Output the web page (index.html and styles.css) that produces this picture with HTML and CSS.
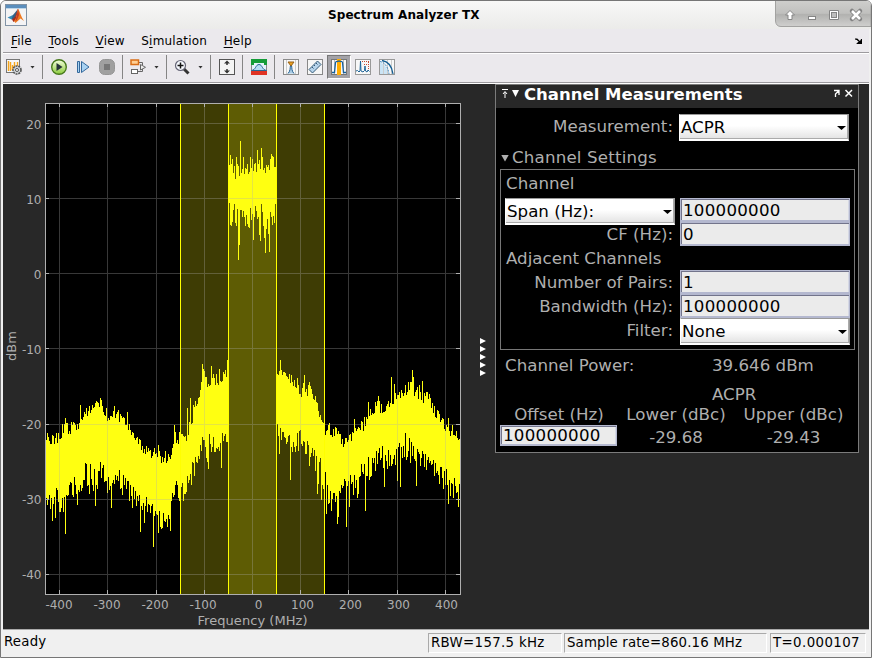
FILE: index.html
```html
<!DOCTYPE html>
<html lang="en">
<head>
<meta charset="utf-8">
<title>Spectrum Analyzer TX</title>
<link rel="stylesheet" href="styles.css">
</head>
<body>
<div class="window">
  <header class="titlebar">
    <svg class="logo" width="22" height="22" viewBox="0 0 22 22">
      <rect x=".5" y=".5" width="21" height="21" fill="#f4f4f4" stroke="#8193a5"/>
      <rect x="1" y="1" width="20" height="3" fill="#5b8fbd"/><rect x="1" y="4" width="20" height="1" fill="#bed6e8"/>
      <path d="M2.500 13.500L8 11L10 13L6.500 15.500Z" fill="#358bb8"/><path d="M8 11L13 5L10 15L6.500 15.500Z" fill="#345f82"/>
      <path d="M13 4.500L11 16L8.500 18L7 15.500L10 13Z" fill="#a62b1c"/><path d="M13 4.500C15 8 16 13 19 17L15.500 14.500L10.500 19L9 17C12 14 12 9 13 4.500Z" fill="#ed7a22"/><path d="M13 4.500L14 11L12 16L10.500 17Z" fill="#c63d20"/>
    </svg>
    <h1>Spectrum Analyzer TX</h1>
    <svg class="controls" width="96" height="27" viewBox="0 0 96 27">
      <defs><linearGradient id="cg" x1="0" y1="0" x2="0" y2="1"><stop offset="0" stop-color="#cfcfcd"/><stop offset=".5" stop-color="#c0c0be"/><stop offset=".55" stop-color="#b2b2b0"/><stop offset="1" stop-color="#d0d0ce"/></linearGradient></defs>
      <path d="M.500 0V21Q1 26.500 6 26.500H96V0Z" fill="url(#cg)" stroke="#a2a2a0"/>
      <path d="M15 10.500L19.500 15H17V19.500H13V15H10.500Z" fill="#fff" stroke="#858585"/>
      <rect x="33.500" y="16.500" width="7" height="3" fill="#fff" stroke="#858585"/>
      <path d="M54.500 10.500H63.500V19.500H54.500Z" fill="#fff" stroke="#858585"/><rect x="56.500" y="12.500" width="5" height="5" fill="#bebebe" stroke="#858585"/>
      <path d="M77 11L85 19M85 11L77 19" stroke="#858585" stroke-width="4.500" stroke-linecap="round"/><path d="M77 11L85 19M85 11L77 19" stroke="#fff" stroke-width="2.600"/>
    </svg>
  </header>
  <nav class="menubar">
    <span><u>F</u>ile</span><span><u>T</u>ools</span><span><u>V</u>iew</span><span>S<u>i</u>mulation</span><span><u>H</u>elp</span>
    <svg class="dock" width="7" height="6" viewBox="0 0 7 6"><path d="M0 1H2L5 4M6.500 1V5.500H2.500L4.500 3.500" fill="#000" stroke="#000" stroke-width="1.200"/></svg>
  </nav>
  <div class="toolbar">
    <svg width="16" height="16" viewBox="0 0 16 16"><rect x=".5" y=".5" width="13" height="13" fill="#f7f7f7" stroke="#777"/><path d="M2.500 2V12M4.500 3V12M6.500 6V11M8.500 3V8M11.500 3V7" stroke="#f4a51c" stroke-width="1.400"/><circle cx="11" cy="11" r="4" fill="#d0d4d8" stroke="#555" stroke-width="1.600" stroke-dasharray="2 .8"/><circle cx="11" cy="11" r="1.500" fill="#fff" stroke="#555"/></svg>
    <i class="caret"></i><i class="sep"></i>
    <svg width="16" height="16" viewBox="0 0 16 16"><defs><linearGradient id="pg" x2="0" y2="1"><stop stop-color="#f6ffe0"/><stop offset="1" stop-color="#8bcb3b"/></linearGradient></defs><circle cx="8" cy="8" r="7.300" fill="url(#pg)" stroke="#47791c" stroke-width="1.400"/><path d="M5.500 4L11.500 8L5.500 12Z" fill="#263238"/></svg>
    <svg width="16" height="16" viewBox="0 0 16 16"><path d="M2.500 2.500H4.500V13.500H2.500ZM6.500 2.500L14 8L6.500 13.500Z" fill="#a9d2f2" stroke="#33689c"/></svg>
    <svg width="16" height="16" viewBox="0 0 16 16"><rect x=".5" y=".5" width="15" height="15" rx="5" fill="#a0a0a0" stroke="#969696"/><rect x="5" y="5" width="6" height="6" fill="#777"/></svg>
    <i class="sep"></i>
    <svg class="pull" width="16" height="16" viewBox="0 0 16 16"><path d="M8 3.500H12.500V6M8 12.500H12.500V10" fill="none" stroke="#666"/><rect x="1" y="1" width="7.500" height="4.500" fill="#ffcf94" stroke="#d96d16" stroke-width="1.500"/><rect x="1.500" y="10.500" width="6" height="4" fill="#fff" stroke="#666"/><path d="M10.500 5.500V11L15.500 8.300Z" fill="#eee" stroke="#666"/></svg>
    <i class="caret"></i><i class="sep"></i>
    <svg class="pull" width="16" height="16" viewBox="0 0 16 16"><path d="M10 10L14.500 14.500" stroke="#333" stroke-width="3"/><circle cx="6.500" cy="6.500" r="5" fill="#f7faff" stroke="#667" stroke-width="1.200"/><path d="M3.500 6.500H9.500M6.500 3.500V9.500" stroke="#111" stroke-width="1.500"/></svg>
    <i class="caret"></i><i class="sep"></i>
    <svg width="16" height="16" viewBox="0 0 16 16"><rect x=".5" y=".5" width="15" height="15" fill="#f4f4f4" stroke="#555"/><path d="M5 4.500L8 1.500L11 4.500ZM5 11.500L8 14.500L11 11.500Z" fill="#333"/><path d="M8 4V6M8 10V12" stroke="#333" stroke-width="1.500"/></svg>
    <i class="sep"></i>
    <svg width="16" height="16" viewBox="0 0 16 16"><rect x=".5" y=".5" width="15" height="15" fill="#e4f2fb" stroke="#888"/><path d="M0 0H16V6H13V4H3V6H0Z" fill="#159c38"/><rect y="12" width="16" height="4" fill="#df3324"/><path d="M.5 11.500C5 11 4.500 5.500 8 5.500S11 11 15.500 11.500Z" fill="#b6dcf4" stroke="#286793"/></svg>
    <i class="sep"></i>
    <svg width="16" height="16" viewBox="0 0 16 16"><rect x=".5" y=".5" width="15" height="15" fill="#f8f8f8" stroke="#8b8b8b"/><path d="M3.500 1V15M12.500 1V15" stroke="#ccc"/><path d="M5 14.500C7.500 12 7 9 7.500 6H8.500C9 9 8.500 12 11 14.500" fill="#a9cbe4" stroke="#235f8f"/><path d="M5 3H11L8 7Z" fill="#eda01d" stroke="#956118"/></svg>
    <svg width="16" height="16" viewBox="0 0 16 16"><rect x=".5" y=".5" width="15" height="15" fill="#f6f6f6" stroke="#888"/><path d="M2 10.500L10.500 2L14 5.500L5.500 14Z" fill="#b7d4ec" stroke="#345a78"/><path d="M5 8L6.500 9.500M7 6L8 7M9 4L10.500 5.500" stroke="#345a78"/></svg>
    <span class="pressed"><svg width="16" height="16" viewBox="0 0 16 16"><rect x=".5" y=".5" width="15" height="15" fill="#f8f8f8" stroke="#777"/><path d="M3.500 1V15M12.500 1V15" stroke="#bbb"/><rect x="6" y="0" width="4" height="16" fill="#ffac00"/><path d="M1 13.500H3.500L4.500 3.500Q5 2 6.500 2.500L8 2L9.500 2.500Q11 2 11.500 3.500L12.500 13.500H15" fill="none" stroke="#17609b" stroke-width="1.300"/></svg></span>
    <svg width="16" height="16" viewBox="0 0 16 16"><rect x=".5" y=".5" width="15" height="15" fill="#f8f8f8" stroke="#999"/><path d="M1 12L2.500 11.500L4 13L5 12L5.500 2L6 12L8 13L9.500 11.500L10 7L10.500 12L12 13L13 11L14.500 12.500" fill="none" stroke="#1d6398"/><path d="M7 2.500H14M13.500 3V10M9 5.500H13" stroke="#c54b32" stroke-dasharray="1 1"/></svg>
    <svg width="16" height="16" viewBox="0 0 16 16"><rect x=".5" y=".5" width="15" height="15" fill="#f8f8f8" stroke="#999"/><path d="M1 3.500C6 5 8 9 9 15H1Z" fill="#cae4f6"/><path d="M4.500 1V15M8.500 1V15M12.500 1V15" stroke="#ccc"/><path d="M1 2.500C6 3.500 9 8 10 15" fill="none" stroke="#458bc0" stroke-dasharray="2 1"/><path d="M3 1.500C10 2.500 13 8 14 15" fill="none" stroke="#165f94" stroke-width="1.300"/></svg>
  </div>
  <main class="workspace">
    <svg class="plot" width="468" height="545" viewBox="3 84 468 545">
      <rect x="45" y="103" width="415" height="491" fill="#000"/>
      <rect x="180" y="104" width="144" height="490" fill="#3e3c04"/>
      <rect x="228" y="104" width="48" height="490" fill="#5e5c04"/>
      <path id="trace" class="trace"/>
      <path id="grid" class="grid"/>
      <path class="edge" d="M180.500 104V594M228.500 104V594M276.500 104V594M324.500 104V594"/>
      <rect class="frame" x="45.500" y="103.500" width="415" height="491"/>
      <path id="ticks" class="frame"/>
      <g class="ylab"><text x="41.500" y="129">20</text><text x="41.500" y="204">10</text><text x="41.500" y="279">0</text><text x="41.500" y="354">-10</text><text x="41.500" y="429">-20</text><text x="41.500" y="504">-30</text><text x="41.500" y="579">-40</text></g>
      <g class="xlab"><text x="59" y="609">-400</text><text x="107" y="609">-300</text><text x="155" y="609">-200</text><text x="203" y="609">-100</text><text x="258.500" y="609">0</text><text x="302.500" y="609">100</text><text x="350.500" y="609">200</text><text x="398.500" y="609">300</text><text x="446.500" y="609">400</text><text class="axis" x="252.500" y="625" textLength="110">Frequency (MHz)</text><text class="axis" transform="translate(16 346) rotate(-90)">dBm</text></g>
    </svg>
    <div class="splitter"><i></i><i></i><i></i><i></i><i></i></div>
    <section class="panel">
      <div class="panel-head">
        <svg width="20" height="10" viewBox="0 0 20 10"><path d="M1 .5H7M4 9V3M2 5L4 2.500L6 5" stroke="#fff" fill="none"/><path d="M11 1H18L14.500 8Z" fill="#fff"/></svg>
        <h2>Channel Measurements</h2>
        <svg class="panel-tools" width="20" height="9" viewBox="0 0 20 9"><path d="M1 1.500H6V6M5.500 2L2.500 5V8" fill="none" stroke="#fff" stroke-width="1.300"/><path d="M12.500 1L19 7.500M19 1L12.500 7.500" stroke="#fff" stroke-width="1.500"/></svg>
      </div>
      <div class="measure"><label>Measurement:</label><div class="combo">ACPR</div></div>
      <div class="section-title"><i></i>Channel Settings</div>
      <div class="settings">
        <div class="group">Channel</div>
        <div class="row"><div class="combo">Span (Hz):</div><div class="field">100000000</div></div>
        <div class="row"><label>CF (Hz):</label><div class="field">0</div></div>
        <div class="row"><div class="group adjacent">Adjacent Channels</div></div>
        <div class="row"><label>Number of Pairs:</label><div class="field">1</div></div>
        <div class="row"><label>Bandwidth (Hz):</label><div class="field">100000000</div></div>
        <div class="row"><label>Filter:</label><div class="combo">None</div></div>
      </div>
      <div class="power"><span>Channel Power:</span><span>39.646 dBm</span></div>
      <div class="acpr-title">ACPR</div>
      <div class="results">
        <span>Offset (Hz)</span><span>Lower (dBc)</span><span>Upper (dBc)</span>
        <div class="field offset">100000000</div><span class="val">-29.68</span><span class="val">-29.43</span>
      </div>
    </section>
  </main>
  <footer class="status"><span class="ready">Ready</span><span class="cell rbw">RBW=157.5 kHz</span><span class="cell rate">Sample rate=860.16 MHz</span><span class="cell time">T=0.000107</span></footer>
</div>
<script src="plot.js"></script>
</body>
</html>
```
FILE: styles.css
```css
* { box-sizing: border-box; }
body { margin: 0; background: #fff; font: 12px "DejaVu Sans", sans-serif; color: #000; }
.window { width: 872px; height: 658px; border: 1px solid #767676; border-radius: 6px 6px 0 0; padding: 0 2px; background: #f0f0f0; overflow: hidden; display: flex; flex-direction: column; }
.titlebar { height: 28px; margin: 0 -2px; padding: 3px 0 0 4px; display: flex; background: linear-gradient(#f8f8f7, #ebebe9); flex: none; }
.titlebar h1 { flex: 1; margin: 3px 0 0; padding-left: 301px; font-size: 12px; line-height: 16px; letter-spacing: .08px; font-weight: bold; white-space: nowrap; }
.logo { flex: none; }
.controls { margin-top: -4px; flex: none; }
.menubar { height: 24px; background: #ebe9ed; border-bottom: 1px solid #9c9a9e; display: flex; align-items: center; gap: 16.6px; padding: 0 7px 0 8px; letter-spacing: .18px; flex: none; }
.menubar u { text-underline-offset: 2px; }
.dock { margin-left: auto; }
.toolbar { height: 30px; background: #ebe9ed; border-top: 1px solid #fff; border-bottom: 1px solid #9c9a9e; display: flex; align-items: center; gap: 8px; padding: 0 3px 2px; flex: none; }
.toolbar svg { flex: none; display: block; }
.caret { width: 5px; height: 3px; background: #333; clip-path: polygon(0 0, 100% 0, 50% 100%); }
.sep { width: 1px; height: 24px; background: #858585; margin-left: -1px; }
.toolbar .pull { margin-left: -1px; }
.pressed { width: 24px; height: 24px; margin: 0 -4px; padding: 3px; background: #a3a2a7; border: 1px solid #777; border-right-color: #fff; border-bottom-color: #fff; }
.workspace { height: 546px; border-top: 1px solid #fff; background: #282828; display: flex; flex: none; }
.plot { flex: none; display: block; shape-rendering: crispEdges; }
.trace { stroke: #ffff11; fill: none; }
.edge { stroke: #ffff00; }
.grid { stroke: #afafaf; stroke-opacity: .32; }
.frame { stroke: #afafaf; fill: none; }
.plot text { fill: #afafaf; font-size: 12px; }
.ylab { text-anchor: end; }
.xlab { text-anchor: middle; }
.plot .axis { font-size: 13px; }
.splitter { width: 24px; padding: 254px 0 0 9px; display: flex; flex-direction: column; gap: 2px; flex: none; }
.splitter i { border: 3px solid transparent; border-left: 6px solid #fff; border-right: 0; width: 6px; height: 6px; flex: none; }
.panel { width: 364px; height: 369px; border: 1px solid #7b7b7b; background: #000; color: #afafaf; font-size: 16.67px; line-height: 20px; white-space: nowrap; }
.panel-head { height: 23px; background: #282828; padding: 4px 5px 0 5px; display: flex; }
.panel h2 { margin: -5px 0 0 3px; color: #fff; font-size: 16.5px; line-height: 22px; }
.panel-tools { margin-left: auto; }
.measure { display: flex; gap: 6px; padding: 6px 0 0 13px; height: 39px; }
.measure label { width: 164px; text-align: right; padding-top: 3px; }
.combo { width: 170px; height: 27px; flex: none; background: linear-gradient(#fff 45%, #e2e2e2); border: 1px solid #999; border-left-color: #fff; border-bottom: 2px solid #fff; box-shadow: inset -1px -1px #aaa; color: #000; padding: 3px 1px; position: relative; }
.combo::after { content: ""; position: absolute; right: 2px; top: 11px; width: 9px; height: 4px; background: #000; clip-path: polygon(0 0, 100% 0, 50% 100%); }
.section-title { height: 22px; display: flex; align-items: center; gap: 3px; padding-left: 5px; letter-spacing: .18px; }
.section-title i { width: 8px; height: 7px; background: #afafaf; clip-path: polygon(0 0, 100% 0, 50% 100%); }
.settings { margin-left: 4px; width: 355px; height: 181px; border: 1px solid #777; padding-left: 4px; }
.group { padding-left: 1px; height: 28px; line-height: 27px; }
.row { display: grid; grid-template-columns: 170px 170px; gap: 5px; height: 24px; }
.row label { text-align: right; padding: 3px 2px 0 0; }
.row .adjacent { height: 24px; line-height: 26px; }
.field { height: 24px; background: #ebebeb; border: 1px solid #b4b8cf; border-bottom-width: 2px; box-shadow: inset 1px 1px #72748b, inset -1px 0 #d5d8e4; color: #000; padding-left: 2px; line-height: 23px; letter-spacing: .25px; }
.power { display: flex; height: 30px; padding: 6px 0 0 9px; }
.power span:first-child { width: 207px; }
.acpr-title { padding-left: 216px; height: 24px; line-height: 30px; }
.results { display: grid; grid-template-columns: 118px 116px 119px; grid-template-rows: 21px 22px; margin-left: 4px; text-align: center; line-height: 22px; }
.results .offset { height: 21px; width: 117px; text-align: left; line-height: 19px; }
.results .val { line-height: 26px; }
.status { height: 29px; border-top: 1px solid #aaa; display: flex; font-size: 13.33px; background: #f0f0f0; padding: 3px 3px 0 1px; flex: none; white-space: nowrap; }
.ready { width: 424px; line-height: 17px; letter-spacing: .2px; }
.cell { height: 20px; line-height: 18px; border: 1px solid #aaa; border-right-color: #fff; border-bottom-color: #fff; padding-left: 2px; flex: none; }
.rbw { width: 134px; margin-right: 2px; letter-spacing: .33px; }
.rate { width: 203px; margin-right: 3px; letter-spacing: .15px; }
.time { width: 96px; letter-spacing: .4px; }
```
FILE: plot.js
```js
// Envelope anchors: x, highest top, lowest top, shortest bottom, longest bottom.
const left = [
  [45,431,443,481,503],[52,434,445,485,515],[60,424,447,490,518],[68,420,436,482,502],[78,421,432,473,500],
  [85,405,420,462,490],[94,403,414,465,500],[100,398,409,455,480],[105,407,422,468,488],[111,408,424,478,503],
  [116,405,422,465,485],[122,416,428,473,495],[128,417,431,480,505],[134,433,443,488,511],[145,444,456,495,510],
  [156,449,460,508,523],[162,452,467,512,530],[170,449,460,500,520],[174,432,448,480,497],[180,431,443,480,510],
  [187,433,442,475,492],[191,403,427,463,487],[198,391,404,445,468],[202,368,382,432,446],[208,378,390,435,468],
  [212,373,388,430,460],[220,370,386,437,455],[224,368,382,428,443],[228,360,377,432,450]];
const right = [
  [277,369,375,423,436],[285,370,377,432,446],[292,375,387,435,455],[300,378,398,428,450],[306,378,396,438,463],
  [313,386,400,445,472],[320,413,421,455,490],[326,421,438,475,505],[334,425,440,482,503],[344,438,450,476,498],
  [351,428,441,474,500],[358,424,434,471,498],[364,417,431,457,482],[370,404,421,450,480],[378,398,414,443,468],
  [385,400,416,447,472],[392,392,407,440,468],[400,390,402,433,477],[408,380,395,432,470],[415,385,398,443,470],
  [422,385,405,450,464],[430,394,410,456,479],[438,405,421,463,484],[446,415,434,468,497],[454,423,441,477,504],[460,432,446,481,507]];
const center = {
  top: [225,195,222,207,249,228,267,201,222,228,258,153,249,237,201,252,234,237,222,252,246,201,234,207,243,222,219,246,180,222,210,237,174,201,240,234,249,225,231,225,240,207,192,198,201,231,231],
  bottom: [339,405,408,396,360,342,399,408,357,510,465,360,360,381,363,381,408,375,402,411,414,354,390,372,450,381,348,363,387,381,435,453,342,366,408,444,489,417,387,432,486,366,381,405,378,399,342]
};
const peaks = {65:418,80:405,100:398,101:400,114:406,127:412,158:445,174:425,187:408,190:398,202:364,203:369,211:366,219:369,227:360,280:360,281:370,304:375,309:382,354:419,368:402,378:396,391:377,394:384,398:395,412:370,413:377,422:381,429:394};
const dips = {52:521,55:518,65:534,77:505,95:506,111:508,140:532,144:523,153:547,158:533,161:529,167:527,170:531,180:510,208:469,221:468,279:454,290:480,317:494,321:500,326:514,331:511,337:524,338:517,346:527,349:507,365:511,384:487,397:481,400:487,416:486,448:504,458:507};
let seed = 7129;
const random = () => (seed = (seed * 16807) % 2147483647) / 2147483647;
let d = "";
const column = (x, a, b) => { d += `M${x + .5} ${Math.round(a)}V${Math.round(b)}`; };
function draw(points) {
  for (let i = 0; i < points.length - 1; i++) {
    const p = points[i], q = points[i + 1];
    for (let x = p[0]; x < q[0]; x++) {
      const f = (x - p[0]) / (q[0] - p[0]);
      const v = p.map((n, j) => n + (q[j] - n) * f);
      const top = peaks[x] || v[1] + (v[2] - v[1]) * random();
      const bottom = dips[x] || v[3] + (v[4] - v[3]) * random();
      column(x, top, bottom);
    }
  }
}
draw(left);
draw(right);
center.top.forEach((t, i) => column(229 + i, 90 + t / 3, 90 + center.bottom[i] / 3));
document.getElementById("trace").setAttribute("d", d);
const xs = [59.5,107.5,156.5,204.5,252.5,300.5,348.5,397.5,445.5];
const ys = [123.5,198.5,273.5,348.5,424.5,499.5,574.5];
document.getElementById("grid").setAttribute("d", xs.map(x => `M${x} 104V594`).join("") + ys.map(y => `M46 ${y}H460`).join(""));
document.getElementById("ticks").setAttribute("d", xs.map(x => `M${x} 104V107M${x} 590V594`).join("") + ys.map(y => `M46 ${y}H49M456 ${y}H460`).join(""));
```
